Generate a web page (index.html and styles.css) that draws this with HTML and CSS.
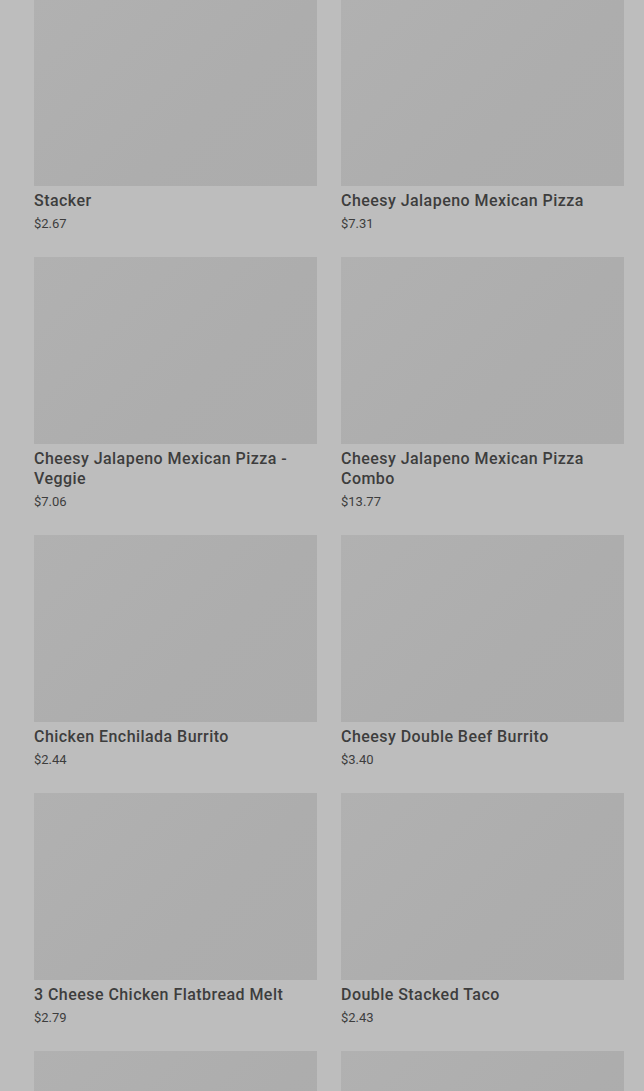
FILE: index.html
```html
<!DOCTYPE html>
<html>
  <head>
    <title>Menu</title>
    <link rel="stylesheet" href="styles.css">
  </head>
  <body>
    <div class="menu-grid">
      <div class="item">
        <div class="item-image"></div>
        <div class="item-name">Stacker</div>
        <div class="item-price">$2.67</div>
      </div>
      <div class="item">
        <div class="item-image"></div>
        <div class="item-name">Cheesy Jalapeno Mexican Pizza</div>
        <div class="item-price">$7.31</div>
      </div>
      <div class="item">
        <div class="item-image"></div>
        <div class="item-name">Cheesy Jalapeno Mexican Pizza - Veggie</div>
        <div class="item-price">$7.06</div>
      </div>
      <div class="item">
        <div class="item-image"></div>
        <div class="item-name">Cheesy Jalapeno Mexican Pizza Combo</div>
        <div class="item-price">$13.77</div>
      </div>
      <div class="item">
        <div class="item-image"></div>
        <div class="item-name">Chicken Enchilada Burrito</div>
        <div class="item-price">$2.44</div>
      </div>
      <div class="item">
        <div class="item-image"></div>
        <div class="item-name">Cheesy Double Beef Burrito</div>
        <div class="item-price">$3.40</div>
      </div>
      <div class="item">
        <div class="item-image"></div>
        <div class="item-name">3 Cheese Chicken Flatbread Melt</div>
        <div class="item-price">$2.79</div>
      </div>
      <div class="item">
        <div class="item-image"></div>
        <div class="item-name">Double Stacked Taco</div>
        <div class="item-price">$2.43</div>
      </div>
      <!-- next row, only the pictures are in view -->
      <div class="item">
        <div class="item-image"></div>
      </div>
      <div class="item">
        <div class="item-image"></div>
      </div>
    </div>
  </body>
</html>
```

FILE: styles.css
```css
html, body {
  margin: 0;
  background: #bdbdbd;
  overflow: hidden;
}

body {
  font-family: Roboto, 'Liberation Sans', Arial, sans-serif;
  color: #3d3d3d;
}

.menu-grid {
  display: grid;
  grid-template-columns: 283px 283px;
  column-gap: 24px;
  padding: 0 20px 0 34px;
  margin-top: -1px;
}

.item {
  padding-bottom: 24px;
}

.item-image {
  height: 187px;
  margin-bottom: 5px;
  background: linear-gradient(135deg, #b1b1b1 0%, #adadad 60%, #acacac 100%);
}

.item-name {
  font-size: 16px;
  font-weight: 500;
  line-height: 20px;
  letter-spacing: 0.45px;
}

.item-price {
  margin-top: 4px;
  font-size: 13px;
  line-height: 18px;
}
```
